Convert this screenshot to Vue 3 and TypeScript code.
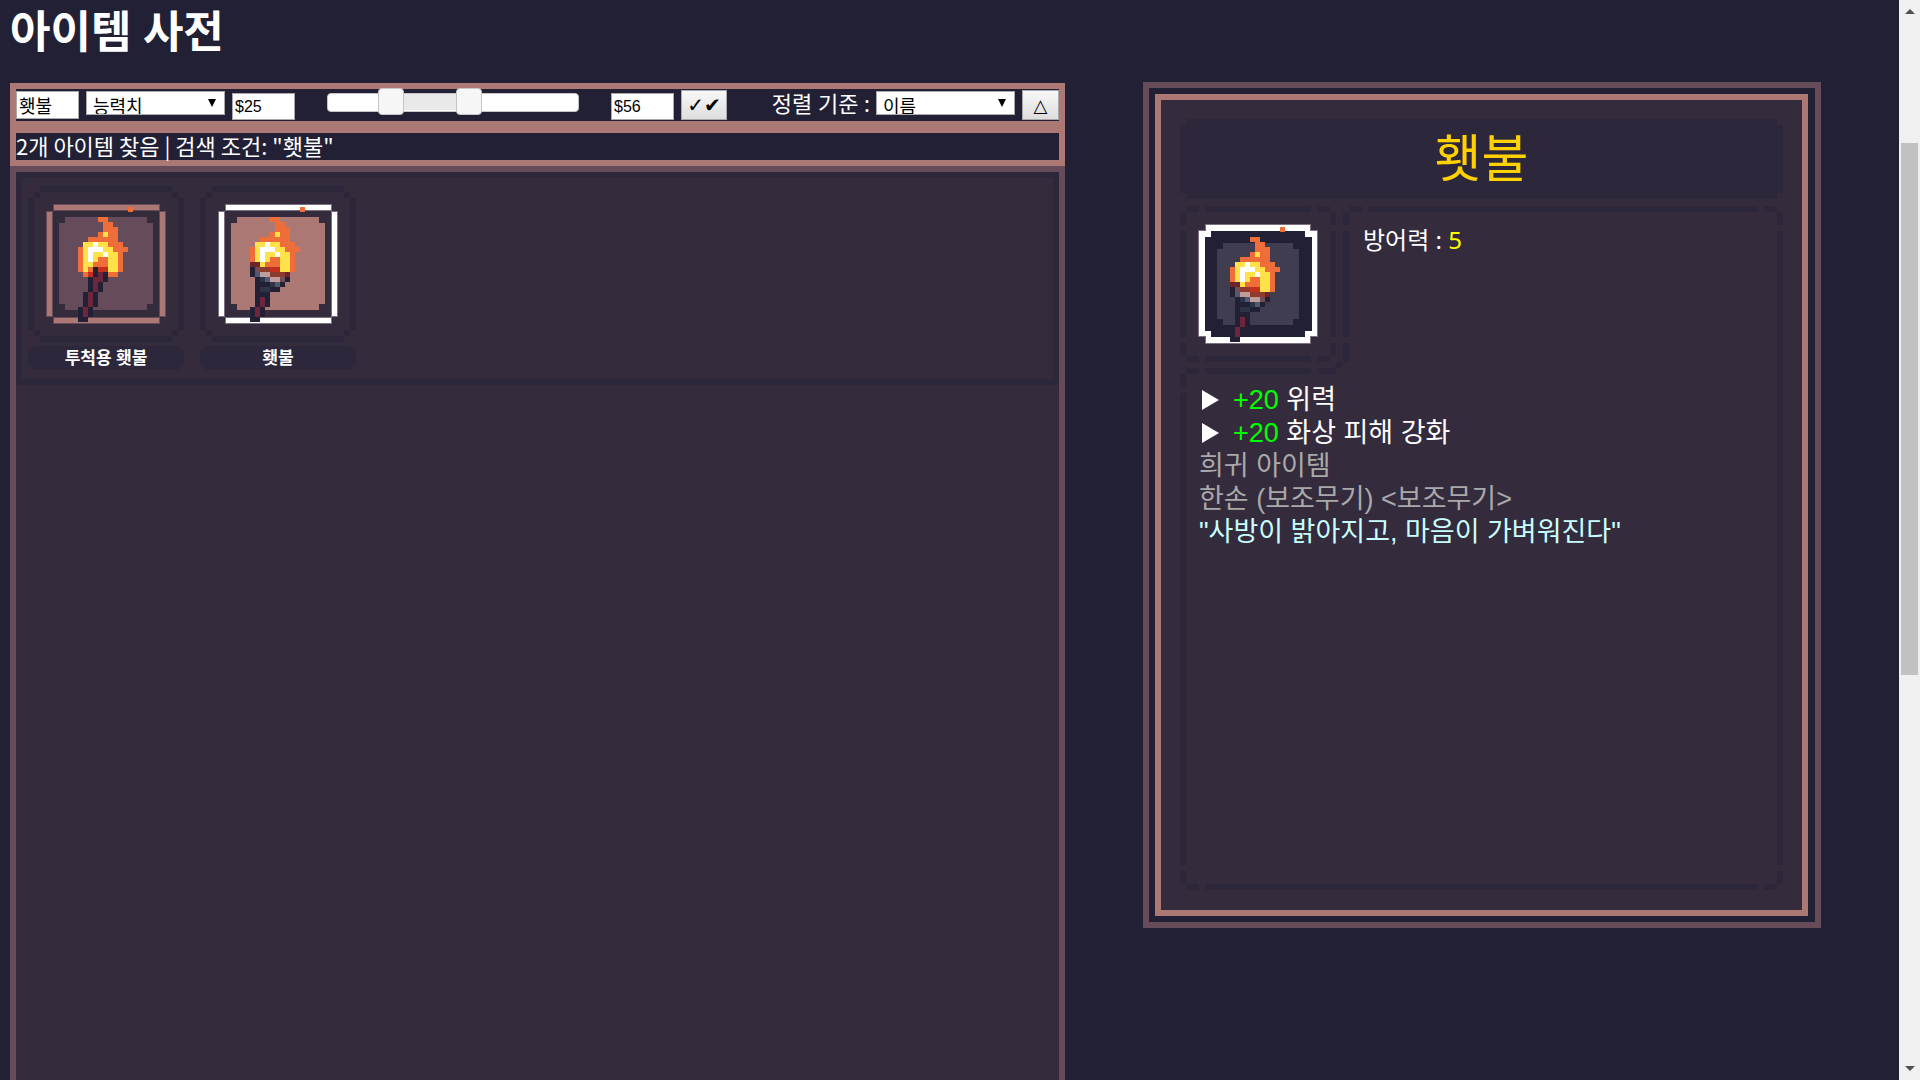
<script setup lang="ts">
import { computed, ref } from 'vue'

interface Pixel {
  x: number
  y: number
  color: string
}

interface Item {
  name: string
  sprite: string[]
  frame: string
  fill: string
  edge: string
}

const palette: Record<string, string> = {
  o: '#ef6d38',
  y: '#ffe14a',
  w: '#ffffff',
  r: '#c4301e',
  m: '#6f263b',
  d: '#222034',
  b: '#8f3a2e',
  k: '#6f2429',
  s: '#525872',
  n: '#2d3448',
  p: '#bf9d9b',
  v: '#704e57',
}

const flame = [
  '..........o',
  '',
  '....oo',
  '.....oo',
  '.....ooo',
  '....oyoo',
  '..oooooo',
  '.yywyyooo',
  'oywwwyyooo',
  'oywyywyyo',
  'oywyooyyo',
]

const throwingTorch = [
  ...flame,
  'oyyoooyyo',
  'oyodrryyo',
  '.ordmdoo',
  '..dmmd',
  '..dmd',
  '..dmd',
  '.dmd',
  '.dmd',
  '.dmd',
  'dmd',
  'dmd',
  'dd',
]

const torch = [
  ...flame,
  'kkyoooyyo',
  'dvbbrryyo',
  'dsppbbbk',
  '.dnsppvd',
  '.dddnsd',
  '.dnndd',
  '.ddd',
  '.dmd',
  '.dmd',
  'dmd',
  'dmd',
  'dd',
]

const CELL = 5

function toPixels(rows: string[]): Pixel[] {
  return rows.flatMap((row, r) =>
    [...row].flatMap((key, c) =>
      palette[key] ? [{ x: 32 + c * CELL, y: 3 + r * CELL, color: palette[key] }] : [],
    ),
  )
}

const items: Item[] = [
  { name: '투척용 횃불', sprite: throwingTorch, frame: '#ab7873', fill: '#664b5a', edge: '#664b5a' },
  { name: '횃불', sprite: torch, frame: '#ffffff', fill: '#ab7873', edge: '#7c6f80' },
]

const effects = ['위력', '화상 피해 강화']

const query = ref('횃불')
const low = ref(25)
const high = ref(56)
const MAX = 99
const lowText = computed(() => `$${low.value}`)
const highText = computed(() => `$${high.value}`)
const rangeStyle = computed(() => ({
  left: `${(low.value / MAX) * 100}%`,
  right: `${100 - (high.value / MAX) * 100}%`,
}))
</script>

<template>
  <div class="app">
    <main class="page">
      <section class="dictionary">
        <h1>아이템 사전</h1>
        <form class="toolbar" @submit.prevent>
          <input v-model="query" class="field search" type="text" aria-label="검색" />
          <span class="picker">
            <select aria-label="능력치">
              <option>능력치</option>
            </select>
            <svg class="caret" viewBox="0 0 8 8" aria-hidden="true"><path d="M0 0h8L4 8z" /></svg>
          </span>
          <input class="field price" type="text" :value="lowText" aria-label="최소 가격" />
          <div class="slider">
            <div class="slider-fill" :style="rangeStyle"></div>
            <input v-model.number="low" type="range" min="0" :max="MAX" aria-label="최소 가격 범위" />
            <input v-model.number="high" type="range" min="0" :max="MAX" aria-label="최대 가격 범위" />
          </div>
          <input class="field price" type="text" :value="highText" aria-label="최대 가격" />
          <button class="btn checks" type="button">✓✔</button>
          <label class="sort-label" for="sort">정렬 기준 :</label>
          <span class="picker">
            <select id="sort">
              <option>이름</option>
            </select>
            <svg class="caret" viewBox="0 0 8 8" aria-hidden="true"><path d="M0 0h8L4 8z" /></svg>
          </span>
          <button class="btn order" type="button">△</button>
        </form>
        <p class="status">2개 아이템 찾음 | 검색 조건: "횃불"</p>
        <div class="list">
          <ul class="items">
            <li v-for="item in items" :key="item.name" class="item">
              <div class="slot">
                <svg class="icon" viewBox="0 0 120 120" shape-rendering="crispEdges" aria-hidden="true">
                  <g :fill="item.frame" :stroke="item.edge">
                    <path d="M7.500.5h106v6h-106zM7.500 113.500h106v6h-106zM.5 7.500h6v105h-6zM113.500 7.500h6v105h-6z" />
                  </g>
                  <path :fill="item.fill" d="M19 13h82v6h6v81h-6v6h-82v-6h-6v-81h6z" />
                  <rect
                    v-for="(p, i) in toPixels(item.sprite)"
                    :key="i"
                    :x="p.x"
                    :y="p.y"
                    width="5"
                    height="5"
                    :fill="p.color"
                  />
                </svg>
              </div>
              <div class="name">{{ item.name }}</div>
            </li>
          </ul>
        </div>
      </section>

      <aside class="side">
        <article class="detail">
          <div class="detail-inner">
            <h2>횃불</h2>
            <div class="summary">
              <div class="slot corner-slot">
                <svg class="icon" viewBox="0 0 120 120" shape-rendering="crispEdges" aria-hidden="true">
                  <path
                    fill="#ffffff"
                    stroke="#7c6f80"
                    d="M7.500.5h105v6h7v106h-7v7h-105v-7h-7v-106h7z"
                  />
                  <path fill="#222034" d="M13 7h94v6h7v94h-7v6h-94v-6h-6v-94h6z" />
                  <path fill="#403d50" d="M25 19h70v6h6v70h-6v6h-70v-6h-6v-70h6z" />
                  <rect
                    v-for="(p, i) in toPixels(torch)"
                    :key="i"
                    :x="p.x"
                    :y="p.y"
                    width="5"
                    height="5"
                    :fill="p.color"
                  />
                </svg>
              </div>
              <svg class="elbow" viewBox="0 0 169 168" shape-rendering="crispEdges" aria-hidden="true">
                <path
                  d="M163 6h6v13h-6zM163 25h6v106h-6zM163 137h6v19h-6zM156 156h7v6h-7zM138 162h18v6h-18zM25 162h106v6h-106zM6 162h13v6h-13z"
                />
              </svg>
              <div class="stats">방어력 : <span class="value">5</span></div>
            </div>
            <div class="description">
              <ul>
                <li v-for="effect in effects" :key="effect">
                  <svg class="bullet" viewBox="0 0 17 20" aria-hidden="true"><path d="M0 0l17 10L0 20z" /></svg>
                  <span><span class="bonus">+20</span> {{ effect }}</span>
                </li>
              </ul>
              <p class="muted">희귀 아이템</p>
              <p class="muted">한손 (보조무기) &lt;보조무기&gt;</p>
              <p class="flavor">"사방이 밝아지고, 마음이 가벼워진다"</p>
            </div>
          </div>
        </article>
      </aside>
    </main>

    <div class="scrollbar" aria-hidden="true">
      <svg viewBox="0 0 10 5"><path d="M0 5h10L5 0z" /></svg>
      <div class="track"><div class="thumb"></div></div>
      <svg viewBox="0 0 10 5"><path d="M0 0h10L5 5z" /></svg>
    </div>
  </div>
</template>

<style>
body {
  background: #222034;
}
</style>

<style scoped>
* {
  box-sizing: border-box;
}

.app {
  display: flex;
  height: 100vh;
  overflow: hidden;
  background: #222034;
  color: #ffffff;
  font-family: 'Noto Sans', 'Noto Sans CJK KR', sans-serif;
}

.page {
  flex: 1;
  display: grid;
  grid-template-columns: 1055fr 834fr;
  padding-left: 10px;
  min-width: 0;
}

.dictionary {
  display: flex;
  flex-direction: column;
  min-height: 0;
}

h1 {
  flex: none;
  margin: 0;
  height: 83px;
  font-size: 44px;
  line-height: 62px;
  font-weight: 700;
}

.toolbar {
  flex: none;
  display: flex;
  align-items: flex-start;
  height: 44px;
  padding-top: 1px;
  border: 6px solid #ab7873;
}

.field {
  width: 63px;
  height: 27px;
  padding: 0 2px;
  border: 1px solid #a9a9a9;
  background: #ffffff;
  color: #000000;
  font-family: 'Liberation Sans', 'Noto Sans CJK KR', sans-serif;
  font-size: 16px;
}

.search {
  height: 28px;
  margin: 1px 7px 0 0;
  padding: 0 2px;
  font-family: 'Noto Sans CJK KR', sans-serif;
  font-size: 18px;
}

.price {
  margin-top: 3px;
}

.picker {
  position: relative;
  display: flex;
  margin: 1px 7px 0 0;
}

.picker select {
  appearance: none;
  width: 139px;
  height: 24px;
  padding: 2px 6px 0;
  border: 1px solid #a9a9a9;
  border-radius: 0;
  background: #ffffff;
  color: #000000;
  font-family: 'Noto Sans CJK KR', sans-serif;
  font-size: 18px;
  line-height: 22px;
}

.caret {
  position: absolute;
  top: 8px;
  right: 9px;
  width: 8px;
  height: 8px;
  pointer-events: none;
}

.slider {
  position: relative;
  flex: none;
  width: 252px;
  height: 19px;
  margin: 3px 32px 0;
  border: 1px solid #c5c5c5;
  border-radius: 4px;
  background: #ffffff;
}

.slider-fill {
  position: absolute;
  top: 0;
  bottom: 1px;
  background: #e9e9e9;
}

.slider input {
  position: absolute;
  top: -6px;
  left: -13px;
  width: 276px;
  height: 27px;
  margin: 0;
  appearance: none;
  background: transparent;
  pointer-events: none;
}

.slider input::-webkit-slider-thumb {
  appearance: none;
  width: 26px;
  height: 27px;
  border: 1px solid #c5c5c5;
  border-radius: 4px;
  background: #f6f6f6;
  pointer-events: auto;
}

.btn {
  height: 30px;
  padding: 0;
  border: 1px solid #a9a9a9;
  background: linear-gradient(#f8f8f8, #dddddd);
  color: #000000;
  font-family: 'DejaVu Sans', sans-serif;
  font-size: 18px;
}

.checks {
  width: 46px;
  margin-left: 7px;
  font-size: 20px;
}

.order {
  width: 37px;
}

.sort-label {
  margin-left: auto;
  padding-right: 6px;
  font-size: 22px;
  line-height: 26px;
}

.status {
  flex: none;
  height: 39px;
  margin: 0;
  border: 6px solid #ab7873;
  font-family: 'Noto Sans CJK KR', sans-serif;
  font-size: 22px;
  line-height: 25px;
}

.list {
  flex: 1;
  border: 6px solid #664b5a;
  border-bottom: 0;
  background: #342b3d;
}

.items {
  display: flex;
  gap: 16px;
  margin: 0;
  padding: 8px 6px 9px;
  border: 6px solid #2c273a;
  list-style: none;
}

.slot {
  --line: linear-gradient(#2c273a, #2c273a);
  display: flex;
  align-items: center;
  justify-content: center;
  width: 156px;
  height: 156px;
  background:
    var(--line) 12px 0 / 132px 6px,
    var(--line) 12px 150px / 132px 6px,
    var(--line) 0 12px / 6px 132px,
    var(--line) 150px 12px / 6px 132px,
    var(--line) 6px 6px / 6px 6px,
    var(--line) 144px 6px / 6px 6px,
    var(--line) 6px 144px / 6px 6px,
    var(--line) 144px 144px / 6px 6px;
  background-repeat: no-repeat;
}

.icon {
  width: 120px;
  height: 120px;
}

.name {
  height: 24px;
  margin-top: 4px;
  background: #2c273a;
  clip-path: polygon(6px 0, 150px 0, 156px 6px, 156px 18px, 150px 24px, 6px 24px, 0 18px, 0 6px);
  font-size: 17px;
  font-weight: 700;
  line-height: 24px;
  text-align: center;
}

.side {
  padding: 82px 78px 0;
}

.detail {
  padding: 6px 7px 6px 6px;
  border: 6px solid #664b5a;
}

.detail-inner {
  padding: 19px 19px 20px;
  border: 6px solid #ab7873;
  background: #342b3d;
}

h2 {
  height: 80px;
  margin: 0 0 7px;
  background: #2c273a;
  clip-path: polygon(
    6px 0, calc(100% - 6px) 0, calc(100% - 6px) 6px, 100% 6px,
    100% calc(100% - 6px), calc(100% - 6px) calc(100% - 6px), calc(100% - 6px) 100%, 6px 100%,
    6px calc(100% - 6px), 0 calc(100% - 6px), 0 6px, 6px 6px
  );
  color: #ffd100;
  font-size: 51px;
  font-weight: 400;
  line-height: 76px;
  text-align: center;
}

.summary {
  --line: linear-gradient(#2c273a, #2c273a);
  position: relative;
  display: flex;
  height: 168px;
  background:
    var(--line) 169px 0 / 13px 6px,
    var(--line) 188px 0 / calc(100% - 213px) 6px,
    var(--line) calc(100% - 6px) 0 / 13px 6px,
    var(--line) 100% 6px / 6px 13px,
    var(--line) 100% 25px / 6px 143px;
  background-repeat: no-repeat;
}

.corner-slot {
  flex: none;
  background:
    var(--line) 6px 0 / 13px 6px,
    var(--line) 25px 0 / 106px 6px,
    var(--line) 137px 0 / 13px 6px,
    var(--line) 6px 150px / 13px 6px,
    var(--line) 25px 150px / 106px 6px,
    var(--line) 137px 150px / 13px 6px,
    var(--line) 0 6px / 6px 13px,
    var(--line) 0 25px / 6px 106px,
    var(--line) 0 137px / 6px 13px,
    var(--line) 150px 6px / 6px 13px,
    var(--line) 150px 25px / 6px 106px,
    var(--line) 150px 137px / 6px 13px;
  background-repeat: no-repeat;
}

.elbow {
  position: absolute;
  top: 0;
  left: 0;
  width: 169px;
  height: 168px;
  fill: #2c273a;
}

.stats {
  padding: 17px 0 0 27px;
  font-size: 24px;
  line-height: 33px;
}

.value {
  color: #ffff00;
}

.description {
  --line: linear-gradient(#2c273a, #2c273a);
  min-height: 516px;
  padding: 10px 19px;
  background:
    var(--line) 0 0 / 6px 13px,
    var(--line) 0 19px / 6px calc(100% - 44px),
    var(--line) 0 calc(100% - 6px) / 6px 13px,
    var(--line) 100% 0 / 6px calc(100% - 25px),
    var(--line) 100% calc(100% - 6px) / 6px 13px,
    var(--line) 6px 100% / 13px 6px,
    var(--line) 25px 100% / calc(100% - 50px) 6px,
    var(--line) calc(100% - 6px) 100% / 13px 6px;
  background-repeat: no-repeat;
  font-family: 'Liberation Sans', 'Noto Sans CJK KR', sans-serif;
  font-size: 27px;
  line-height: 33px;
}

.description ul {
  margin: 0;
  padding: 0;
  list-style: none;
}

.description li {
  display: flex;
  align-items: center;
  gap: 14px;
  height: 33px;
}

.description li > span {
  white-space: pre;
}

.bullet {
  width: 17px;
  height: 20px;
  margin: 0 0 2px 3px;
  fill: #ffffff;
}

.description p {
  height: 33px;
  margin: 0;
}

.bonus {
  color: #00ff00;
}

.description .muted {
  color: #a9a9a9;
}

.description .flavor {
  color: #c8ffff;
}

.scrollbar {
  flex: none;
  display: flex;
  flex-direction: column;
  align-items: center;
  width: 21px;
  padding: 9px 0;
  background: #f0f0f0;
}

.scrollbar svg {
  width: 10px;
  height: 5px;
  fill: #505050;
}

.track {
  flex: 1;
  width: 17px;
  padding: 7px 0;
}

.thumb {
  height: 532px;
  margin-top: 122px;
  background: #c1c1c1;
}
</style>
